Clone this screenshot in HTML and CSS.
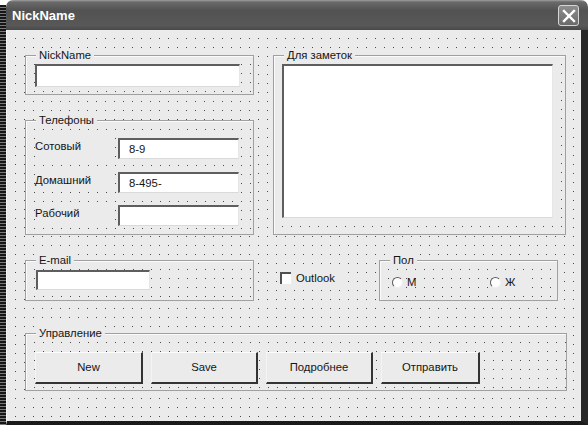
FILE: index.html
```html
<!DOCTYPE html>
<html lang="ru">
<head>
<meta charset="utf-8">
<title>NickName</title>
<link rel="stylesheet" href="styles.css">
</head>
<body>
<div class="screen">
  <div class="hatch"></div>
  <div class="window">
    <div class="titlebar">
      <span class="title">NickName</span>
      <span class="close"><svg width="14" height="14" viewBox="0 0 14 14"><path d="M2 2 L12 12 M12 2 L2 12" stroke="#fff" stroke-width="2.4" stroke-linecap="square"/></svg></span>
    </div>
    <div class="client grid">
      <div class="row1">
        <div class="col-left">
          <div class="frame grid f-nick">
            <span class="cap">NickName</span>
            <div class="tb tb-nick"></div>
          </div>
          <div class="frame grid f-tel">
            <span class="cap">Телефоны</span>
            <div class="tel-row"><span class="lbl">Сотовый</span><div class="tb tb-tel">8-9</div></div>
            <div class="tel-row"><span class="lbl">Домашний</span><div class="tb tb-tel">8-495-</div></div>
            <div class="tel-row"><span class="lbl">Рабочий</span><div class="tb tb-tel"></div></div>
          </div>
        </div>
        <div class="frame grid f-notes">
          <span class="cap">Для заметок</span>
          <div class="tb tb-notes"></div>
        </div>
      </div>
      <div class="row2">
        <div class="frame grid f-mail">
          <span class="cap">E-mail</span>
          <div class="tb tb-mail"></div>
        </div>
        <div class="chk-zone"><span class="chk"><span class="box"></span>Outlook</span></div>
        <div class="frame grid f-sex">
          <span class="cap">Пол</span>
          <span class="radio"><i class="dot"></i>М</span>
          <span class="radio"><i class="dot"></i>Ж</span>
        </div>
      </div>
      <div class="frame grid f-ctrl">
        <span class="cap">Управление</span>
        <div class="buttons">
          <span class="btn w108">New</span>
          <span class="btn w107">Save</span>
          <span class="btn w107">Подробнее</span>
          <span class="btn w99">Отправить</span>
        </div>
      </div>
    </div>
  </div>
</div>
</body>
</html>
```

FILE: styles.css
```css
* { box-sizing: border-box; }
html, body { margin: 0; padding: 0; background: #ffffff; }
body {
  font-family: "Liberation Sans", Arial, sans-serif;
  font-size: 11.3px;
  color: #151515;
}
.screen {
  width: 588px;
  height: 425px;
  display: flex;
  overflow: hidden;
}
.hatch {
  width: 6px;
  margin-top: 5px;
  background: repeating-linear-gradient(to bottom, #161616 0 2px, #7a7a7a 2px 3px);
}
.window {
  flex: 1;
  display: flex;
  flex-direction: column;
}
.titlebar {
  height: 30px;
  border-radius: 7px 7px 0 0;
  background: linear-gradient(#a0a0a0 0, #6a6a6a 2px, #525252 35%, #585858 85%, #484848 100%);
  display: flex;
  align-items: center;
  justify-content: space-between;
  padding: 1px 9px 0 6px;
}
.title {
  color: #fff;
  font-weight: bold;
  font-size: 13px;
}
.close {
  width: 21px;
  height: 21px;
  border: 1px solid #d6d6d6;
  border-radius: 3px;
  background: linear-gradient(#8e8e8e, #6a6a6a);
  display: flex;
  align-items: center;
  justify-content: center;
}
.grid {
  background-color: #4a4a4a;
  background-image:
    linear-gradient(90deg, #ebebeb 8px, transparent 8px),
    linear-gradient(#ebebeb 8px, transparent 8px);
  background-size: 9px 9px;
}
.client {
  flex: 1;
  border-left: 1px solid #f6f6f6;
  border-right: 7px solid #262626;
  border-bottom: 4px solid #1a1a1a;
  padding: 25px 0 0 18px;
}
.row1 { display: flex; gap: 19px; }
.col-left { display: flex; flex-direction: column; }
.frame {
  position: relative;
  border: 1px solid #a0a0a0;
  box-shadow: inset 1px 1px 0 #fafafa;
}
.cap {
  position: absolute;
  top: -8px;
  left: 10px;
  padding: 0 3px;
  line-height: 14px;
  background: #ebebeb;
}
.tb {
  background: #fff;
  border-top: 2px solid #5e5e5e;
  border-left: 2px solid #5e5e5e;
  border-right: 1px solid #e6e6e6;
  border-bottom: 1px solid #dadada;
}
.f-nick { width: 229px; height: 40px; padding: 8px 0 0 9px; }
.tb-nick { width: 205px; height: 23px; }
.f-tel {
  width: 229px;
  height: 115px;
  margin-top: 25px;
  padding: 17px 0 0 9px;
  display: flex;
  flex-direction: column;
  gap: 12.5px;
}
.tel-row { display: flex; height: 21px; }
.lbl {
  width: 74px;
  margin-right: 9px;
  height: 19px;
  padding-top: 2px;
  background: #ebebeb;
}
.tb-tel {
  width: 121px;
  height: 21px;
  padding: 3px 0 0 9px;
}
.f-notes { width: 293px; height: 180px; padding: 8px 0 0 8px; }
.f-notes .cap { left: 10px; }
.tb-notes { width: 271px; height: 154px; }
.row2 { display: flex; margin-top: 25px; }
.f-mail { width: 229px; height: 41px; padding: 9px 0 0 10px; }
.tb-mail { width: 114px; height: 20px; }
.chk-zone { width: 125px; padding: 10px 0 0 26px; }
.chk {
  display: flex;
  align-items: center;
  gap: 5px;
  width: 62px;
  height: 15px;
  background: #ebebeb;
}
.box {
  width: 11px;
  height: 12px;
  background: #fff;
  border-top: 2px solid #505050;
  border-left: 2px solid #505050;
}
.f-sex {
  width: 179px;
  height: 41px;
  padding: 14px 0 0 12px;
  display: flex;
  align-items: flex-start;
}
.radio {
  display: flex;
  align-items: center;
  gap: 4px;
  width: 98px;
  height: 14px;
}
.radio:last-of-type { width: 40px; background: #ebebeb; }
.radio:first-of-type { background: linear-gradient(90deg, #ebebeb 0 30px, transparent 30px); }
.dot {
  width: 11px;
  height: 11px;
  border-radius: 50%;
  background: #fff;
  border: 1.5px solid;
  border-color: #5a5a5a #f0f0f0 #f0f0f0 #5a5a5a;
}
.f-ctrl { width: 542px; height: 58px; margin-top: 32px; padding: 18px 0 0 9px; }
.buttons { display: flex; gap: 8px; }
.btn {
  height: 32px;
  display: flex;
  align-items: center;
  justify-content: center;
  background: #ebebeb;
  border-top: 1px solid #fcfcfc;
  border-left: 1px solid #f4f4f4;
  border-right: 2px solid #333;
  border-bottom: 2px solid #333;
  padding-bottom: 1px;
}
.w108 { width: 108px; }
.w107 { width: 107px; }
.w99 { width: 99px; }
```
